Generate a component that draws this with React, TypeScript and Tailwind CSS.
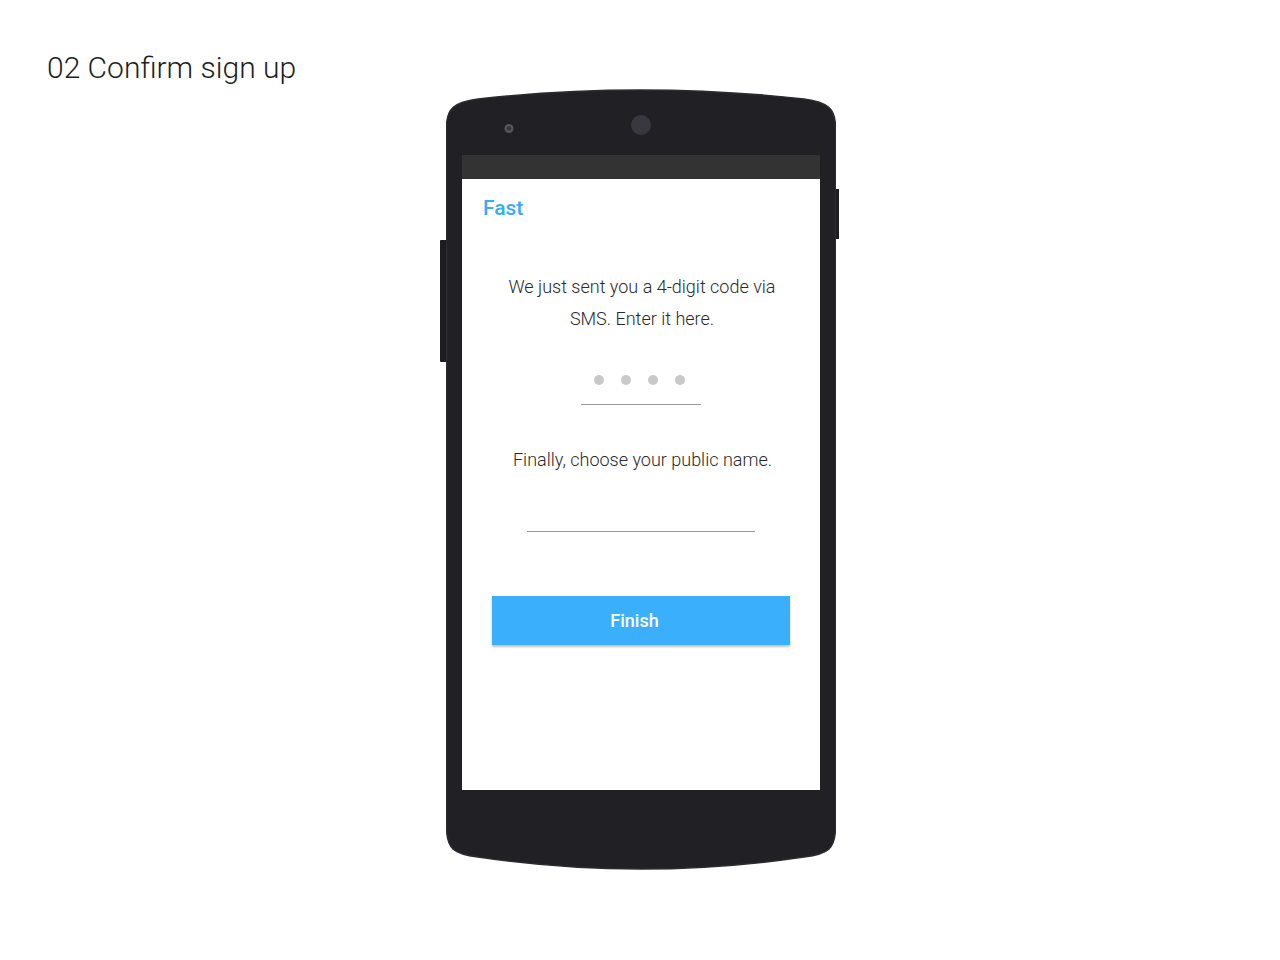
import React from "react";

export default function App() {
  return (
    <div className="w-[1280px] h-[960px] bg-white relative overflow-hidden" style={{ fontFamily: "Roboto, 'Noto Sans', sans-serif" }}>
      <div className="pl-[47px] pt-[48px] text-[30px] leading-[40px] font-light text-[#1e1e1e]">02 Confirm sign up</div>
      <div className="relative w-[390px] h-[781px] ml-[446px] mt-[1px]">
        <svg className="absolute inset-0" width="390" height="781" viewBox="0 0 390 781">
          <path
            d="M0.5,38 C0.5,20 8,13 32,10 Q195,-8 358,10 C382,13 389.5,20 389.5,38 L389.5,738 C389.5,760 382,765 358,768 Q195,792 32,768 C8,765 0.5,760 0.5,738 Z"
            fill="#202025"
            stroke="#2c2c30"
            strokeWidth="1.5"
          />
          <circle cx="63" cy="39.5" r="4.5" fill="#55555a" />
          <circle cx="63" cy="39.5" r="2.2" fill="#35353a" />
          <circle cx="195" cy="36" r="10" fill="#38383e" />
        </svg>
        <div className="absolute left-[-6px] top-[151px] w-[6px] h-[122px] bg-[#1d1d21] rounded-l-[1px]" />
        <div className="absolute right-[-3px] top-[100px] w-[3px] h-[50px] bg-[#1d1d21]" />
        <div className="relative pt-[66px] pl-[16px]">
          <div className="w-[358px] h-[635px] bg-white flex flex-col">
            <div className="h-[24px] bg-[#333333]" />
            <div className="flex flex-col items-center">
              <div className="self-start pl-[21px] pt-[17px] text-[21px] leading-[24px] font-medium text-[#35acf4]">Fast</div>
              <p className="mt-[51px] w-[290px] text-center text-[18px] leading-[32px] font-light text-[#2a2a2a] pl-[2px]">
                We just sent you a 4-digit code via SMS. Enter it here.
              </p>
              <div className="mt-[40px] flex gap-[17px] pr-[3px]">
                <span className="w-[10px] h-[10px] rounded-full bg-[#c9c9c9]" />
                <span className="w-[10px] h-[10px] rounded-full bg-[#c9c9c9]" />
                <span className="w-[10px] h-[10px] rounded-full bg-[#c9c9c9]" />
                <span className="w-[10px] h-[10px] rounded-full bg-[#c9c9c9]" />
              </div>
              <div className="mt-[19px] w-[120px] h-px bg-[#9a9a9a]" />
              <p className="mt-[43px] text-[18px] leading-[24px] font-light text-[#2a2a2a] pl-[3px]">Finally, choose your public name.</p>
              <div className="mt-[59px] w-[228px] h-px bg-[#9a9a9a]" />
              <button className="mt-[64px] w-[298px] h-[49px] bg-[#3ab0fc] text-white text-[18px] font-medium shadow-[0_2px_2px_rgba(0,0,0,0.25)] pr-[13px]">
                Finish
              </button>
            </div>
          </div>
        </div>
      </div>
    </div>
  );
}
